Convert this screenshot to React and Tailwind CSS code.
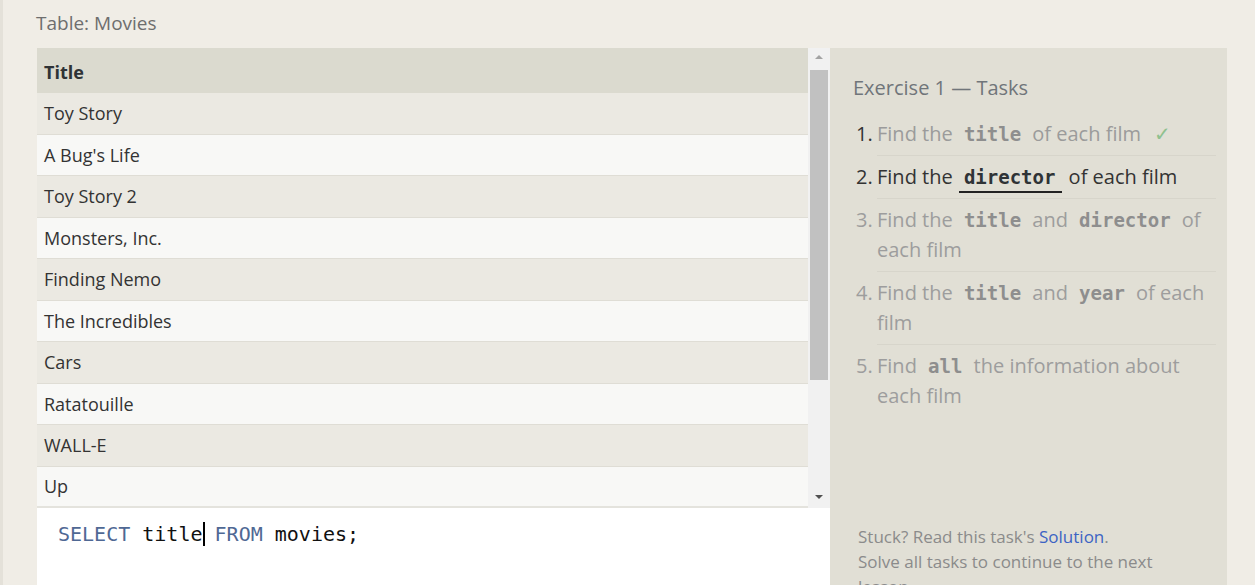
import React from "react";

const movies = [
  "Toy Story",
  "A Bug's Life",
  "Toy Story 2",
  "Monsters, Inc.",
  "Finding Nemo",
  "The Incredibles",
  "Cars",
  "Ratatouille",
  "WALL-E",
  "Up",
];

function Code({ children, dark, underline }) {
  return (
    <code
      className={
        "font-['DejaVu_Sans_Mono',monospace] font-bold text-[19px] px-[5px] mx-[1px] " +
        (dark ? "text-[#2f3336] " : "text-[#8e8e8e] ") +
        (underline ? "border-b-2 border-[#222] pb-[3px] pr-[7px]" : "")
      }
    >
      {children}
    </code>
  );
}

function Task({ n, numDark, textClass, children, last }) {
  return (
    <li className="flex">
      <span className={"w-[21px] shrink-0 py-[6px] leading-[30px] " + (numDark ? "text-[#333]" : "text-[#9d9d9d]")}>
        {n}.
      </span>
      <div className={"flex-1 py-[6px] leading-[30px] " + textClass + (last ? "" : " border-b border-[#d7d5cb]")}>
        {children}
      </div>
    </li>
  );
}

export default function App() {
  return (
    <div className="w-[1255px] h-[585px] overflow-hidden bg-[#f0ede6] border-l-[3px] border-[#e4e1d9] font-['Open_Sans',sans-serif] flex flex-col">
      <div className="h-[48px] pl-[33px] leading-[46px] text-[19px] text-[#6e6e6e] shrink-0">Table: Movies</div>
      <div className="flex pl-[34px]">
        <div className="w-[793px] flex flex-col shrink-0">
          <div className="flex h-[460px]">
            <div className="w-[771px] flex flex-col">
              <div className="h-[45px] shrink-0 bg-[#dbdacf] px-[7px] pt-[3px] flex items-center text-[18px] font-bold text-[#2f3336]">
                Title
              </div>
              {movies.map((m, i) => (
                <div
                  key={m}
                  className={
                    "h-[41.5px] shrink-0 px-[7px] pt-[1px] flex items-center text-[18px] text-[#333] " +
                    (i === movies.length - 1 ? "border-b-2 border-[#e4e3dd] " : "border-b border-[#dfddd5] ") +
                    (i % 2 === 0 ? "bg-[#ebe9e2]" : "bg-[#f8f8f6]")
                  }
                >
                  {m}
                </div>
              ))}
            </div>
            <div className="w-[22px] bg-[#f1f1f1] flex flex-col items-center">
              <div className="h-[18px] w-full flex items-center justify-center">
                <div className="w-0 h-0 border-l-[4px] border-r-[4px] border-b-[4px] border-l-transparent border-r-transparent border-b-[#a3a3a3]" />
              </div>
              <div className="mt-[4px] w-[18px] h-[310px] bg-[#c1c1c1]" />
              <div className="flex-1" />
              <div className="h-[18px] mb-[2px] w-full flex items-center justify-center">
                <div className="w-0 h-0 border-l-[4px] border-r-[4px] border-t-[4px] border-l-transparent border-r-transparent border-t-[#505050]" />
              </div>
            </div>
          </div>
          <div className="h-[77px] bg-white pl-[21px] pt-[12px] font-['DejaVu_Sans_Mono',monospace] text-[20px] leading-[28px] whitespace-pre text-[#111]">
            <span className="text-[#4f6894]">SELECT</span>
            {" title"}
            <span className="inline-block w-[2px] h-[24px] bg-black align-[-5px] -mr-[2px]" />
            {" "}
            <span className="text-[#4f6894]">FROM</span>
            {" movies;"}
          </div>
        </div>
        <div className="w-[397px] h-[537px] bg-[#e1dfd5] pl-[23px] pr-[11px] shrink-0 flex flex-col">
          <div className="pt-[25px] leading-[30px] text-[20px] text-[#70757a]">Exercise 1 — Tasks</div>
          <ul className="mt-[10px] pl-[3px] text-[20px]">
            <Task n={1} numDark textClass="text-[#9b9b9b]">
              Find the <Code>title</Code> of each film <span className="ml-[8px] text-[#8fc18f]">✓</span>
            </Task>
            <Task n={2} numDark textClass="text-[#333]">
              Find the <Code dark underline>director</Code> of each film
            </Task>
            <Task n={3} textClass="text-[#9d9d9d]">
              Find the <Code>title</Code> and <Code>director</Code> of each film
            </Task>
            <Task n={4} textClass="text-[#9d9d9d]">
              Find the <Code>title</Code> and <Code>year</Code> of each film
            </Task>
            <Task n={5} textClass="text-[#9d9d9d]" last>
              Find <Code>all</Code> the information about each film
            </Task>
          </ul>
          <div className="mt-[107px] ml-[5px] w-[320px] text-[17px] leading-[25px] text-[#8b8b8b]">
            Stuck? Read this task's <span className="text-[#3c63c4]">Solution</span>.
            <br />
            Solve all tasks to continue to the next lesson.
          </div>
        </div>
      </div>
    </div>
  );
}
